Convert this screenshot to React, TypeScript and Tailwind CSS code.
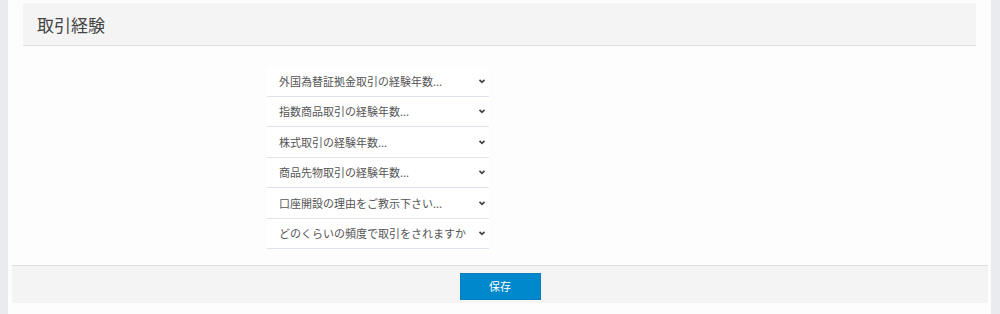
import React from "react";

const questions = [
  "外国為替証拠金取引の経験年数...",
  "指数商品取引の経験年数...",
  "株式取引の経験年数...",
  "商品先物取引の経験年数...",
  "口座開設の理由をご教示下さい...",
  "どのくらいの頻度で取引をされますか？",
];

function Chevron() {
  return (
    <svg width="8" height="6" viewBox="0 0 8 6" className="shrink-0">
      <path d="M1.5 1.8 L4 4.3 L6.5 1.8" fill="none" stroke="#444" strokeWidth="1.7" />
    </svg>
  );
}

export default function App() {
  return (
    <div
      className="flex min-h-[314px] bg-[#eaebef]"
      style={{ fontFamily: '"Noto Sans CJK JP", "Noto Sans", sans-serif' }}
    >
      <div className="w-[8px] shrink-0" />
      <div className="flex w-[983px] shrink-0 flex-col bg-[#fdfdfd]">
        {/* header */}
        <div className="mx-[15px] mt-[3px] flex h-[43px] items-center rounded-tr-[3px] border-b border-[#e2e2e2] bg-[#f4f4f4] pl-[14px]">
          <h2 className="text-[17px] leading-none text-[#444]">取引経験</h2>
        </div>

        {/* selects */}
        <div className="ml-[259px] mt-[20px] w-[222px]">
          {questions.map((q) => (
            <div
              key={q}
              className="box-border flex h-[30.5px] items-center justify-between border-b border-[#dce3ea] bg-white pl-[12px] pr-[3px]"
            >
              <span className="w-[188px] overflow-hidden whitespace-nowrap text-[11px] text-[#555]">{q}</span>
              <Chevron />
            </div>
          ))}
        </div>

        {/* footer */}
        <div className="ml-[4px] mr-[3px] mt-[16px] flex h-[38px] justify-center border-t border-[#dedede] bg-[#f4f4f4] pt-[7px]">
          <button className="h-[27px] w-[81px] border border-[#0b7dbf] bg-[#0088cc] text-[11px] text-white">
            保存
          </button>
        </div>
      </div>
    </div>
  );
}
